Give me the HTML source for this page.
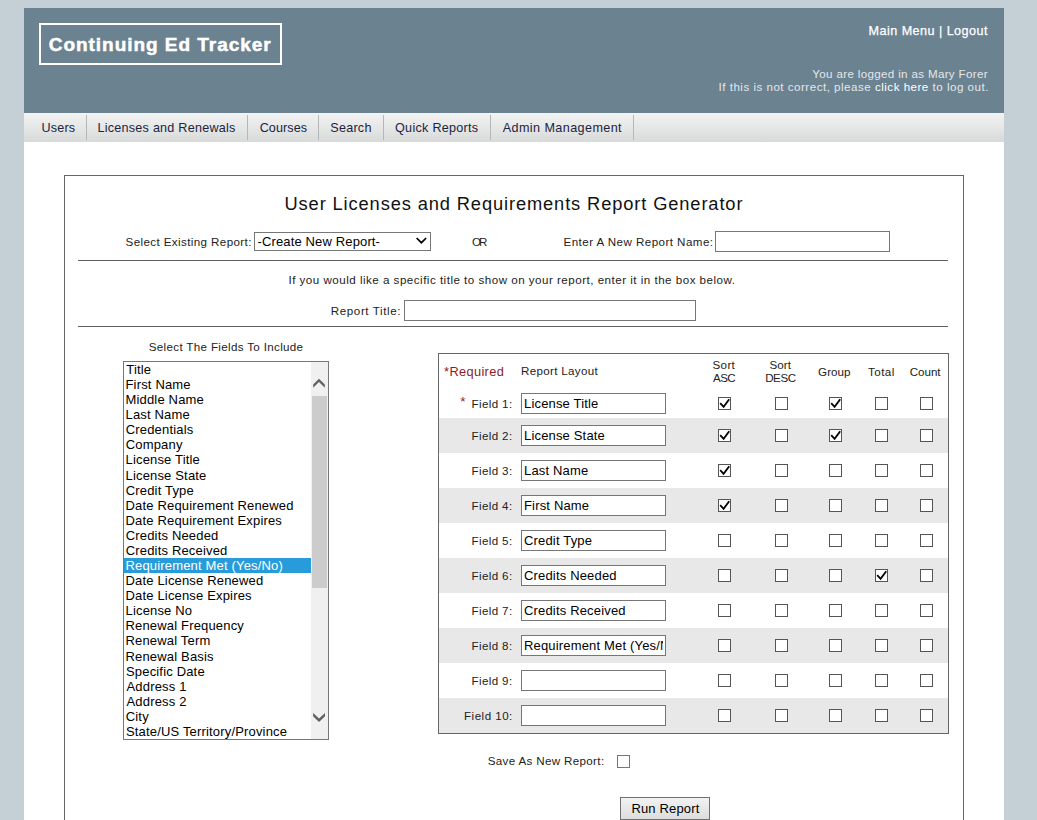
<!DOCTYPE html>
<html><head><meta charset="utf-8"><style>
html,body{margin:0;padding:0}
body{width:1037px;height:820px;overflow:hidden;background:#c5cfd6;position:relative;font-family:"Liberation Sans",sans-serif}
body>div{position:absolute;box-sizing:content-box}
.t{white-space:nowrap}
</style></head><body>
<div style="left:24px;top:8px;width:980px;height:105px;background:#6b8291"></div>
<div style="left:24px;top:113px;width:980px;height:29px;background:linear-gradient(#f3f3f3,#d8dada)"></div>
<div style="left:24px;top:142px;width:980px;height:700px;background:#fff"></div>
<div style="left:39px;top:23px;width:239px;height:38px;border:2px solid #fff"></div>
<div class="t" style="left:48.70px;top:32.00px;font-size:19.0px;line-height:25px;color:#fff;font-weight:bold;letter-spacing:0.968px;-webkit-text-stroke:0.5px #fff;">Continuing Ed Tracker</div>
<div class="t" style="left:868.55px;top:22.50px;font-size:12.6px;line-height:17px;color:#fff;letter-spacing:0.462px;-webkit-text-stroke:0.25px #fff;">Main Menu | Logout</div>
<div class="t" style="left:812.30px;top:65.50px;font-size:11.6px;line-height:16px;color:#e3e7ea;letter-spacing:0.337px;">You are logged in as Mary Forer</div>
<div class="t" style="left:718.55px;top:78.50px;font-size:11.6px;line-height:16px;color:#e3e7ea;letter-spacing:0.492px;">If this is not correct, please <span style="color:#fff">click here</span> to log out.</div>
<div class="t" style="left:41.55px;top:119.50px;font-size:12.6px;line-height:17px;color:#1b2440;letter-spacing:0.150px;">Users</div>
<div class="t" style="left:97.55px;top:119.50px;font-size:12.6px;line-height:17px;color:#1b2440;letter-spacing:0.237px;">Licenses and Renewals</div>
<div class="t" style="left:259.65px;top:119.50px;font-size:12.6px;line-height:17px;color:#1b2440;letter-spacing:0.083px;">Courses</div>
<div class="t" style="left:330.35px;top:119.50px;font-size:12.6px;line-height:17px;color:#1b2440;letter-spacing:0.230px;">Search</div>
<div class="t" style="left:395.05px;top:119.50px;font-size:12.6px;line-height:17px;color:#1b2440;letter-spacing:0.275px;">Quick Reports</div>
<div class="t" style="left:502.75px;top:119.50px;font-size:12.6px;line-height:17px;color:#1b2440;letter-spacing:0.410px;">Admin Management</div>
<div style="left:86px;top:115px;width:1px;height:25px;background:#b4b8ba"></div>
<div style="left:247px;top:115px;width:1px;height:25px;background:#b4b8ba"></div>
<div style="left:318px;top:115px;width:1px;height:25px;background:#b4b8ba"></div>
<div style="left:383px;top:115px;width:1px;height:25px;background:#b4b8ba"></div>
<div style="left:490px;top:115px;width:1px;height:25px;background:#b4b8ba"></div>
<div style="left:633px;top:115px;width:1px;height:25px;background:#b4b8ba"></div>
<div style="left:64px;top:175px;width:898px;height:700px;border:1px solid #666"></div>
<div class="t" style="left:284.50px;top:191.70px;font-size:18.3px;line-height:24px;color:#111;letter-spacing:0.877px;">User Licenses and Requirements Report Generator</div>
<div class="t" style="left:125.55px;top:233.50px;font-size:11.6px;line-height:16px;color:#222;letter-spacing:0.391px;">Select Existing Report:</div>
<div style="left:254px;top:232px;width:175px;height:17px;border:1px solid #777;background:#fff"></div>
<div class="t" style="left:257.50px;top:232.80px;font-size:13px;line-height:17px;color:#000;letter-spacing:0.140px;">-Create New Report-</div>
<svg style="position:absolute;left:410px;top:230px" width="24" height="20"><path d="M6.6 8 L11.4 12.7 L16.2 8" fill="none" stroke="#000" stroke-width="1.7"/></svg>
<div class="t" style="left:472.05px;top:233.50px;font-size:11.6px;line-height:16px;color:#222;letter-spacing:-1.950px;">OR</div>
<div class="t" style="left:563.55px;top:233.50px;font-size:11.6px;line-height:16px;color:#222;letter-spacing:0.446px;">Enter A New Report Name:</div>
<div style="left:715px;top:231px;width:173px;height:19px;border:1px solid #777;background:#fff"></div>
<div style="left:78px;top:260px;width:870px;height:1px;background:#5f5f5f"></div>
<div class="t" style="left:288.45px;top:271.50px;font-size:11.6px;line-height:16px;color:#222;letter-spacing:0.490px;">If you would like a specific title to show on your report, enter it in the box below.</div>
<div class="t" style="left:330.75px;top:302.50px;font-size:11.6px;line-height:16px;color:#222;letter-spacing:0.604px;">Report Title:</div>
<div style="left:404px;top:300px;width:290px;height:19px;border:1px solid #777;background:#fff"></div>
<div style="left:78px;top:326px;width:870px;height:1px;background:#5f5f5f"></div>
<div class="t" style="left:148.75px;top:338.50px;font-size:11.6px;line-height:16px;color:#222;letter-spacing:0.337px;">Select The Fields To Include</div>
<div style="left:123px;top:361px;width:204px;height:377px;border:1px solid #777;background:#fff"></div>
<div class="t" style="left:126.25px;top:361.00px;font-size:13px;line-height:17px;color:#000;letter-spacing:0.170px;">Title</div>
<div class="t" style="left:125.50px;top:376.00px;font-size:13px;line-height:17px;color:#000;letter-spacing:0.170px;">First Name</div>
<div class="t" style="left:125.50px;top:391.00px;font-size:13px;line-height:17px;color:#000;letter-spacing:0.170px;">Middle Name</div>
<div class="t" style="left:125.50px;top:406.00px;font-size:13px;line-height:17px;color:#000;letter-spacing:0.170px;">Last Name</div>
<div class="t" style="left:125.75px;top:421.00px;font-size:13px;line-height:17px;color:#000;letter-spacing:0.170px;">Credentials</div>
<div class="t" style="left:125.75px;top:436.00px;font-size:13px;line-height:17px;color:#000;letter-spacing:0.170px;">Company</div>
<div class="t" style="left:125.50px;top:451.00px;font-size:13px;line-height:17px;color:#000;letter-spacing:0.170px;">License Title</div>
<div class="t" style="left:125.50px;top:467.00px;font-size:13px;line-height:17px;color:#000;letter-spacing:0.170px;">License State</div>
<div class="t" style="left:125.75px;top:482.00px;font-size:13px;line-height:17px;color:#000;letter-spacing:0.170px;">Credit Type</div>
<div class="t" style="left:125.50px;top:497.00px;font-size:13px;line-height:17px;color:#000;letter-spacing:0.170px;">Date Requirement Renewed</div>
<div class="t" style="left:125.50px;top:512.00px;font-size:13px;line-height:17px;color:#000;letter-spacing:0.170px;">Date Requirement Expires</div>
<div class="t" style="left:125.75px;top:527.00px;font-size:13px;line-height:17px;color:#000;letter-spacing:0.170px;">Credits Needed</div>
<div class="t" style="left:125.75px;top:542.00px;font-size:13px;line-height:17px;color:#000;letter-spacing:0.170px;">Credits Received</div>
<div style="left:124px;top:558px;width:187px;height:15px;background:#289cda"></div>
<div class="t" style="left:125.50px;top:557.00px;font-size:13px;line-height:17px;color:#fff;letter-spacing:0.170px;">Requirement Met (Yes/No)</div>
<div class="t" style="left:125.50px;top:572.00px;font-size:13px;line-height:17px;color:#000;letter-spacing:0.170px;">Date License Renewed</div>
<div class="t" style="left:125.50px;top:587.00px;font-size:13px;line-height:17px;color:#000;letter-spacing:0.170px;">Date License Expires</div>
<div class="t" style="left:125.50px;top:602.00px;font-size:13px;line-height:17px;color:#000;letter-spacing:0.170px;">License No</div>
<div class="t" style="left:125.50px;top:617.00px;font-size:13px;line-height:17px;color:#000;letter-spacing:0.170px;">Renewal Frequency</div>
<div class="t" style="left:125.50px;top:632.00px;font-size:13px;line-height:17px;color:#000;letter-spacing:0.170px;">Renewal Term</div>
<div class="t" style="left:125.50px;top:648.00px;font-size:13px;line-height:17px;color:#000;letter-spacing:0.170px;">Renewal Basis</div>
<div class="t" style="left:126.00px;top:663.00px;font-size:13px;line-height:17px;color:#000;letter-spacing:0.170px;">Specific Date</div>
<div class="t" style="left:126.50px;top:678.00px;font-size:13px;line-height:17px;color:#000;letter-spacing:0.170px;">Address 1</div>
<div class="t" style="left:126.50px;top:693.00px;font-size:13px;line-height:17px;color:#000;letter-spacing:0.170px;">Address 2</div>
<div class="t" style="left:125.75px;top:708.00px;font-size:13px;line-height:17px;color:#000;letter-spacing:0.170px;">City</div>
<div class="t" style="left:126.00px;top:723.00px;font-size:13px;line-height:17px;color:#000;letter-spacing:0.170px;">State/US Territory/Province</div>
<div style="left:311px;top:362px;width:17px;height:377px;background:#f0f0f0"></div>
<div style="left:312px;top:396px;width:15px;height:192px;background:#cccccc"></div>
<svg style="position:absolute;left:0;top:0" width="1037" height="820"><polygon points="313.2,384.5 319,378.8 324.8,384.5 324.8,387.8 319,382.1 313.2,387.8" fill="#606060"/><polygon points="313.1,713 319.05,718.6 325,713 325,716.3 319.05,721.9 313.1,716.3" fill="#606060"/></svg>
<div style="left:438px;top:353px;width:509px;height:379px;border:1px solid #666"></div>
<div style="left:439px;top:418px;width:509px;height:35px;background:#e8e8e8"></div>
<div style="left:439px;top:488px;width:509px;height:35px;background:#e8e8e8"></div>
<div style="left:439px;top:558px;width:509px;height:35px;background:#e8e8e8"></div>
<div style="left:439px;top:628px;width:509px;height:35px;background:#e8e8e8"></div>
<div style="left:439px;top:698px;width:509px;height:35px;background:#e8e8e8"></div>
<div class="t" style="left:444.05px;top:362.70px;font-size:12.8px;line-height:17px;color:#8a1c2c;letter-spacing:0.356px;">*Required</div>
<div class="t" style="left:520.95px;top:363.20px;font-size:11.6px;line-height:16px;color:#222;letter-spacing:0.325px;">Report Layout</div>
<div class="t" style="left:712.55px;top:357.00px;font-size:11.6px;line-height:16px;color:#222;letter-spacing:0.333px;">Sort</div>
<div class="t" style="left:713.05px;top:370.20px;font-size:11.6px;line-height:16px;color:#222;letter-spacing:-0.625px;">ASC</div>
<div class="t" style="left:769.45px;top:357.00px;font-size:11.6px;line-height:16px;color:#222;letter-spacing:0.100px;">Sort</div>
<div class="t" style="left:765.15px;top:370.20px;font-size:11.6px;line-height:16px;color:#222;letter-spacing:-0.417px;">DESC</div>
<div class="t" style="left:818.05px;top:363.70px;font-size:11.6px;line-height:16px;color:#222;letter-spacing:0.075px;">Group</div>
<div class="t" style="left:867.90px;top:363.70px;font-size:11.6px;line-height:16px;color:#222;letter-spacing:0.500px;">Total</div>
<div class="t" style="left:909.75px;top:363.70px;font-size:11.6px;line-height:16px;color:#222;letter-spacing:-0.025px;">Count</div>
<div class="t" style="left:471.55px;top:395.50px;font-size:11.6px;line-height:16px;color:#222;letter-spacing:0.364px;">Field 1:</div>
<div class="t" style="left:460.35px;top:393.00px;font-size:13.5px;line-height:18px;color:#8a1c2c;">*</div>
<div style="left:521px;top:393px;width:143px;height:19px;border:1px solid #767676;background:#fff"></div>
<div class="t" style="left:524px;top:394px;width:139px;height:19px;overflow:hidden;white-space:nowrap;font-size:13px;line-height:19px;color:#000;letter-spacing:0.17px">License Title</div>
<div style="left:718px;top:397px;width:11px;height:11px;border:1px solid #555;background:#fff"></div>
<svg style="position:absolute;left:718px;top:397px" width="13" height="13"><path d="M2.2 6.2 L5.6 9.8 L11.2 2.2" fill="none" stroke="#000" stroke-width="1.8"/></svg>
<div style="left:775px;top:397px;width:11px;height:11px;border:1px solid #555;background:#fff"></div>
<div style="left:829px;top:397px;width:11px;height:11px;border:1px solid #555;background:#fff"></div>
<svg style="position:absolute;left:829px;top:397px" width="13" height="13"><path d="M2.2 6.2 L5.6 9.8 L11.2 2.2" fill="none" stroke="#000" stroke-width="1.8"/></svg>
<div style="left:875px;top:397px;width:11px;height:11px;border:1px solid #555;background:#fff"></div>
<div style="left:920px;top:397px;width:11px;height:11px;border:1px solid #555;background:#fff"></div>
<div class="t" style="left:471.55px;top:427.50px;font-size:11.6px;line-height:16px;color:#222;letter-spacing:0.364px;">Field 2:</div>
<div style="left:521px;top:425px;width:143px;height:19px;border:1px solid #767676;background:#fff"></div>
<div class="t" style="left:524px;top:426px;width:139px;height:19px;overflow:hidden;white-space:nowrap;font-size:13px;line-height:19px;color:#000;letter-spacing:0.17px">License State</div>
<div style="left:718px;top:429px;width:11px;height:11px;border:1px solid #555;background:#fff"></div>
<svg style="position:absolute;left:718px;top:429px" width="13" height="13"><path d="M2.2 6.2 L5.6 9.8 L11.2 2.2" fill="none" stroke="#000" stroke-width="1.8"/></svg>
<div style="left:775px;top:429px;width:11px;height:11px;border:1px solid #555;background:#fff"></div>
<div style="left:829px;top:429px;width:11px;height:11px;border:1px solid #555;background:#fff"></div>
<svg style="position:absolute;left:829px;top:429px" width="13" height="13"><path d="M2.2 6.2 L5.6 9.8 L11.2 2.2" fill="none" stroke="#000" stroke-width="1.8"/></svg>
<div style="left:875px;top:429px;width:11px;height:11px;border:1px solid #555;background:#fff"></div>
<div style="left:920px;top:429px;width:11px;height:11px;border:1px solid #555;background:#fff"></div>
<div class="t" style="left:471.55px;top:462.50px;font-size:11.6px;line-height:16px;color:#222;letter-spacing:0.364px;">Field 3:</div>
<div style="left:521px;top:460px;width:143px;height:19px;border:1px solid #767676;background:#fff"></div>
<div class="t" style="left:524px;top:461px;width:139px;height:19px;overflow:hidden;white-space:nowrap;font-size:13px;line-height:19px;color:#000;letter-spacing:0.17px">Last Name</div>
<div style="left:718px;top:464px;width:11px;height:11px;border:1px solid #555;background:#fff"></div>
<svg style="position:absolute;left:718px;top:464px" width="13" height="13"><path d="M2.2 6.2 L5.6 9.8 L11.2 2.2" fill="none" stroke="#000" stroke-width="1.8"/></svg>
<div style="left:775px;top:464px;width:11px;height:11px;border:1px solid #555;background:#fff"></div>
<div style="left:829px;top:464px;width:11px;height:11px;border:1px solid #555;background:#fff"></div>
<div style="left:875px;top:464px;width:11px;height:11px;border:1px solid #555;background:#fff"></div>
<div style="left:920px;top:464px;width:11px;height:11px;border:1px solid #555;background:#fff"></div>
<div class="t" style="left:471.55px;top:497.50px;font-size:11.6px;line-height:16px;color:#222;letter-spacing:0.364px;">Field 4:</div>
<div style="left:521px;top:495px;width:143px;height:19px;border:1px solid #767676;background:#fff"></div>
<div class="t" style="left:524px;top:496px;width:139px;height:19px;overflow:hidden;white-space:nowrap;font-size:13px;line-height:19px;color:#000;letter-spacing:0.17px">First Name</div>
<div style="left:718px;top:499px;width:11px;height:11px;border:1px solid #555;background:#fff"></div>
<svg style="position:absolute;left:718px;top:499px" width="13" height="13"><path d="M2.2 6.2 L5.6 9.8 L11.2 2.2" fill="none" stroke="#000" stroke-width="1.8"/></svg>
<div style="left:775px;top:499px;width:11px;height:11px;border:1px solid #555;background:#fff"></div>
<div style="left:829px;top:499px;width:11px;height:11px;border:1px solid #555;background:#fff"></div>
<div style="left:875px;top:499px;width:11px;height:11px;border:1px solid #555;background:#fff"></div>
<div style="left:920px;top:499px;width:11px;height:11px;border:1px solid #555;background:#fff"></div>
<div class="t" style="left:471.55px;top:532.50px;font-size:11.6px;line-height:16px;color:#222;letter-spacing:0.364px;">Field 5:</div>
<div style="left:521px;top:530px;width:143px;height:19px;border:1px solid #767676;background:#fff"></div>
<div class="t" style="left:524px;top:531px;width:139px;height:19px;overflow:hidden;white-space:nowrap;font-size:13px;line-height:19px;color:#000;letter-spacing:0.17px">Credit Type</div>
<div style="left:718px;top:534px;width:11px;height:11px;border:1px solid #555;background:#fff"></div>
<div style="left:775px;top:534px;width:11px;height:11px;border:1px solid #555;background:#fff"></div>
<div style="left:829px;top:534px;width:11px;height:11px;border:1px solid #555;background:#fff"></div>
<div style="left:875px;top:534px;width:11px;height:11px;border:1px solid #555;background:#fff"></div>
<div style="left:920px;top:534px;width:11px;height:11px;border:1px solid #555;background:#fff"></div>
<div class="t" style="left:471.55px;top:567.50px;font-size:11.6px;line-height:16px;color:#222;letter-spacing:0.364px;">Field 6:</div>
<div style="left:521px;top:565px;width:143px;height:19px;border:1px solid #767676;background:#fff"></div>
<div class="t" style="left:524px;top:566px;width:139px;height:19px;overflow:hidden;white-space:nowrap;font-size:13px;line-height:19px;color:#000;letter-spacing:0.17px">Credits Needed</div>
<div style="left:718px;top:569px;width:11px;height:11px;border:1px solid #555;background:#fff"></div>
<div style="left:775px;top:569px;width:11px;height:11px;border:1px solid #555;background:#fff"></div>
<div style="left:829px;top:569px;width:11px;height:11px;border:1px solid #555;background:#fff"></div>
<div style="left:875px;top:569px;width:11px;height:11px;border:1px solid #555;background:#fff"></div>
<svg style="position:absolute;left:875px;top:569px" width="13" height="13"><path d="M2.2 6.2 L5.6 9.8 L11.2 2.2" fill="none" stroke="#000" stroke-width="1.8"/></svg>
<div style="left:920px;top:569px;width:11px;height:11px;border:1px solid #555;background:#fff"></div>
<div class="t" style="left:471.55px;top:602.50px;font-size:11.6px;line-height:16px;color:#222;letter-spacing:0.364px;">Field 7:</div>
<div style="left:521px;top:600px;width:143px;height:19px;border:1px solid #767676;background:#fff"></div>
<div class="t" style="left:524px;top:601px;width:139px;height:19px;overflow:hidden;white-space:nowrap;font-size:13px;line-height:19px;color:#000;letter-spacing:0.17px">Credits Received</div>
<div style="left:718px;top:604px;width:11px;height:11px;border:1px solid #555;background:#fff"></div>
<div style="left:775px;top:604px;width:11px;height:11px;border:1px solid #555;background:#fff"></div>
<div style="left:829px;top:604px;width:11px;height:11px;border:1px solid #555;background:#fff"></div>
<div style="left:875px;top:604px;width:11px;height:11px;border:1px solid #555;background:#fff"></div>
<div style="left:920px;top:604px;width:11px;height:11px;border:1px solid #555;background:#fff"></div>
<div class="t" style="left:471.55px;top:637.50px;font-size:11.6px;line-height:16px;color:#222;letter-spacing:0.364px;">Field 8:</div>
<div style="left:521px;top:635px;width:143px;height:19px;border:1px solid #767676;background:#fff"></div>
<div class="t" style="left:524px;top:636px;width:139px;height:19px;overflow:hidden;white-space:nowrap;font-size:13px;line-height:19px;color:#000;letter-spacing:0.17px">Requirement Met (Yes/No)</div>
<div style="left:718px;top:639px;width:11px;height:11px;border:1px solid #555;background:#fff"></div>
<div style="left:775px;top:639px;width:11px;height:11px;border:1px solid #555;background:#fff"></div>
<div style="left:829px;top:639px;width:11px;height:11px;border:1px solid #555;background:#fff"></div>
<div style="left:875px;top:639px;width:11px;height:11px;border:1px solid #555;background:#fff"></div>
<div style="left:920px;top:639px;width:11px;height:11px;border:1px solid #555;background:#fff"></div>
<div class="t" style="left:471.55px;top:672.50px;font-size:11.6px;line-height:16px;color:#222;letter-spacing:0.364px;">Field 9:</div>
<div style="left:521px;top:670px;width:143px;height:19px;border:1px solid #767676;background:#fff"></div>
<div style="left:718px;top:674px;width:11px;height:11px;border:1px solid #555;background:#fff"></div>
<div style="left:775px;top:674px;width:11px;height:11px;border:1px solid #555;background:#fff"></div>
<div style="left:829px;top:674px;width:11px;height:11px;border:1px solid #555;background:#fff"></div>
<div style="left:875px;top:674px;width:11px;height:11px;border:1px solid #555;background:#fff"></div>
<div style="left:920px;top:674px;width:11px;height:11px;border:1px solid #555;background:#fff"></div>
<div class="t" style="left:464.05px;top:707.50px;font-size:11.6px;line-height:16px;color:#222;letter-spacing:0.475px;">Field 10:</div>
<div style="left:521px;top:705px;width:143px;height:19px;border:1px solid #767676;background:#fff"></div>
<div style="left:718px;top:709px;width:11px;height:11px;border:1px solid #555;background:#fff"></div>
<div style="left:775px;top:709px;width:11px;height:11px;border:1px solid #555;background:#fff"></div>
<div style="left:829px;top:709px;width:11px;height:11px;border:1px solid #555;background:#fff"></div>
<div style="left:875px;top:709px;width:11px;height:11px;border:1px solid #555;background:#fff"></div>
<div style="left:920px;top:709px;width:11px;height:11px;border:1px solid #555;background:#fff"></div>
<div class="t" style="left:487.75px;top:753.20px;font-size:11.6px;line-height:16px;color:#222;letter-spacing:0.342px;">Save As New Report:</div>
<div style="left:617px;top:755px;width:11px;height:11px;border:1px solid #767676;background:#fff"></div>
<div style="left:620px;top:797px;width:88px;height:21px;border:1px solid #707070;background:linear-gradient(#f2f2f2,#dddddd)"></div>
<div class="t" style="left:631.45px;top:799.60px;font-size:13px;line-height:17px;color:#000;letter-spacing:0.150px;">Run Report</div>
</body></html>
